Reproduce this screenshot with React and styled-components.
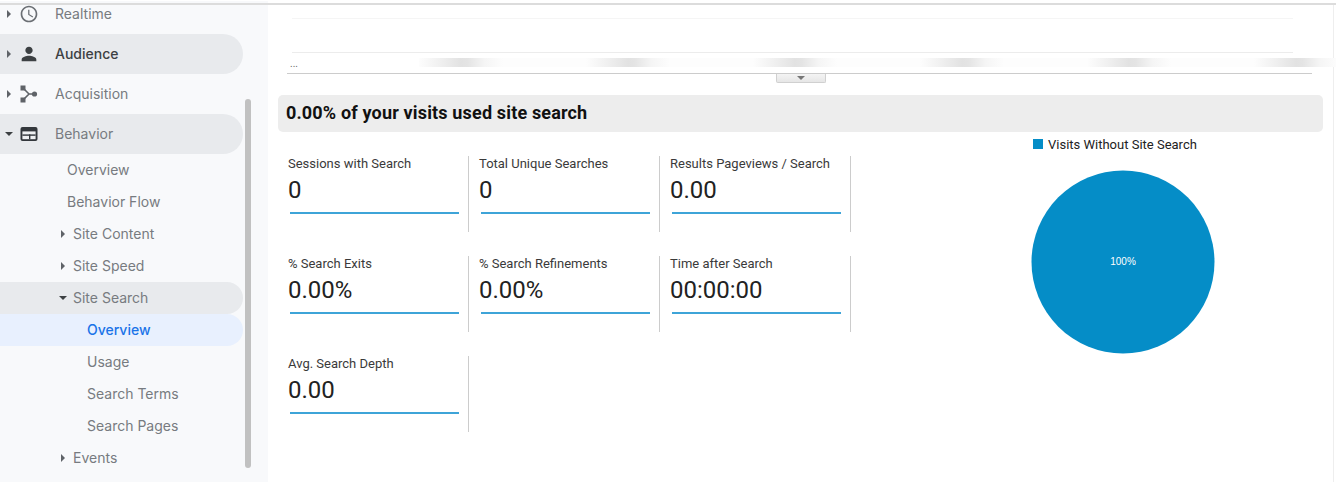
import styled, { createGlobalStyle } from "styled-components";
import { MdPerson, MdAccessTime } from "react-icons/md";

const GlobalStyle = createGlobalStyle`
    html, body {
        margin: 0;
        padding: 0;
        height: 100%;
        background: #fff;
        overflow: hidden;
    }
    body {
        font-family: Roboto, "Liberation Sans", sans-serif;
    }
`;

const Page = styled.div`
    display: flex;
    width: 1336px;
    height: 482px;
    overflow: hidden;
    box-sizing: border-box;
    border-top: 1px solid #fff;
    position: relative;
    &::before {
        content: "";
        position: absolute;
        left: 0;
        right: 0;
        top: 2px;
        height: 2px;
        background: #dcdcdc;
        z-index: 3;
    }
`;

const Sidebar = styled.nav`
    position: relative;
    width: 268px;
    flex: none;
    height: 100%;
    padding-top: 3px;
    box-sizing: border-box;
    background: #f8f9fb;
    overflow: hidden;
`;

const ScrollThumb = styled.div`
    position: absolute;
    left: 245px;
    top: 98px;
    width: 6px;
    height: 369px;
    border-radius: 3px;
    background: #c1c1c1;
`;

const List = styled.ul`
    list-style: none;
    margin: -10px 0 0;
    padding: 0;
`;

const Row = styled.li`
    display: flex;
    align-items: center;
    box-sizing: border-box;
    width: 243px;
    height: ${(p) => (p.$top ? 40 : 32)}px;
    padding-left: ${(p) => p.$indent}px;
    border-radius: 0 20px 20px 0;
    background: ${(p) => (p.$selected ? "#e8f0fe" : p.$open ? "#e8eaed" : "transparent")};
    color: ${(p) => (p.$selected ? "#1a73e8" : p.$strong ? "#3c4043" : "#777b80")};
    font-family: Inter, Roboto, sans-serif;
    font-size: 14px;
    font-weight: ${(p) => (p.$strong || p.$selected ? 500 : 400)};
    white-space: nowrap;
`;

const RowLabel = styled.span`
    margin-bottom: 2px;
`;

const CaretBox = styled.span`
    display: flex;
    justify-content: center;
    width: 16px;
    flex: none;
    margin-right: ${(p) => (p.$top ? 0 : 2)}px;
`;

const Caret = styled.span`
    width: 0;
    height: 0;
    ${(p) =>
        p.$down
            ? `border-left: 4.5px solid transparent;
               border-right: 4.5px solid transparent;
               border-top: 4.5px solid #3c4043;`
            : `border-top: 4px solid transparent;
               border-bottom: 4px solid transparent;
               border-left: 4.5px solid #5f6368;`}
`;

const IconBox = styled.span`
    display: flex;
    align-items: center;
    justify-content: center;
    width: 24px;
    height: 24px;
    flex: none;
    margin-right: 14px;
    color: ${(p) => p.$color || "#6b6f74"};
`;

const Main = styled.main`
    flex: 1;
    min-width: 0;
    position: relative;
    padding-top: 3px;
    display: flex;
    flex-direction: column;
    &::after {
        content: "";
        position: absolute;
        top: 3px;
        bottom: 0;
        left: 1065px;
        width: 1px;
        background: #eeeeee;
    }
`;

const ChartArea = styled.div`
    height: 70px;
    margin-left: 19px;
    width: 1025px;
    box-sizing: border-box;
    border-bottom: 1px solid #cccccc;
    display: flex;
    flex-direction: column;
`;

const GridLines = styled.div`
    margin: 14px 19px 0 5px;
    height: 35px;
    box-sizing: border-box;
    border-top: 1px solid #f5f5f5;
    border-bottom: 1px solid #ececec;
`;

const AxisRow = styled.div`
    position: relative;
    height: 20px;
    font-size: 10px;
    color: #666;
    padding: 4px 0 0 3px;
    box-sizing: border-box;
    line-height: 14px;
`;

const BlurBand = styled.div`
    position: absolute;
    top: 5px;
    left: 132px;
    width: 1052px;
    height: 9px;
    display: flex;
    gap: 83px;
    z-index: 2;
    background: #fdfdfd;
`;

const BlurLabel = styled.span`
    flex: none;
    width: 84px;
    height: 9px;
    background: linear-gradient(90deg, #fdfdfd 0%, #f0f0f0 25%, #e2e2e2 50%, #e4e4e4 58%, #f5f5f5 78%, #fdfdfd 100%);
`;

const ToggleRow = styled.div`
    display: flex;
    height: 9px;
    padding-left: 508px;
`;

const Toggle = styled.button`
    display: flex;
    align-items: center;
    justify-content: center;
    width: 50px;
    height: 9px;
    padding: 0;
    border: 1px solid #d0d0d0;
    border-top: none;
    border-radius: 0 0 2px 2px;
    background: linear-gradient(#f4f4f4, #e6e6e6);
`;

const ToggleCaret = styled.span`
    width: 0;
    height: 0;
    border-left: 4px solid transparent;
    border-right: 4px solid transparent;
    border-top: 4px solid #777;
`;

const TitleBar = styled.h2`
    margin: 12px 0 0 10px;
    width: 1045px;
    height: 37px;
    box-sizing: border-box;
    padding-left: 8px;
    border-radius: 5px;
    background: #ededed;
    color: #111;
    font-size: 18px;
    font-weight: 700;
    letter-spacing: 0.16px;
    line-height: 36px;
`;

const Content = styled.div`
    display: flex;
`;

const MetricGrid = styled.div`
    display: grid;
    grid-template-columns: repeat(3, 191px);
    grid-auto-rows: 100px;
    width: 573px;
    margin-left: 10px;
    padding-top: 24px;
    flex: none;
`;

const Metric = styled.div`
    height: 76px;
    box-sizing: border-box;
    padding: 0 9px 0 10px;
    border-right: 1px solid #cccccc;
`;

const MetricLabel = styled.div`
    font-size: 13px;
    line-height: 15px;
    color: #3a3a3a;
    white-space: nowrap;
`;

const MetricValue = styled.div`
    font-size: 24px;
    line-height: 28px;
    margin-top: 5px;
    color: #222;
`;

const MetricBar = styled.div`
    height: 2px;
    margin: 8px 0 0 2px;
    background: #3ea4d8;
`;

const PieColumn = styled.div`
    flex: none;
    width: 300px;
    margin-left: 182px;
    padding-top: 5px;
    display: flex;
    flex-direction: column;
`;

const Legend = styled.div`
    display: flex;
    align-items: center;
    gap: 5px;
    height: 14px;
    font-size: 13px;
    color: #222;
`;

const LegendSwatch = styled.span`
    width: 10px;
    height: 10px;
    background: #058dc7;
`;

const PieSvg = styled.svg`
    display: block;
    margin: 18px 0 0 -3px;
`;

const PieLabel = styled.text`
    fill: #fff;
    font-family: "Liberation Sans", sans-serif;
    font-size: 10px;
    text-anchor: middle;
`;

const AcquisitionIcon = () => (
    <svg width="20" height="20" viewBox="0 0 20 20">
        <path d="M4 4l6 6h5M4 16l6-6" fill="none" stroke="#5f6368" strokeWidth="1.6" />
        <rect x="1.5" y="1.5" width="5" height="5" fill="#5f6368" />
        <rect x="1.5" y="13.5" width="5" height="5" fill="#5f6368" />
        <circle cx="15.5" cy="10" r="2.6" fill="#5f6368" />
    </svg>
);

const BehaviorIcon = () => (
    <svg width="20" height="20" viewBox="0 0 20 20">
        <rect x="1.5" y="3" width="17" height="14" rx="2" fill="#33373c" />
        <rect x="3.4" y="7.4" width="13.2" height="7.8" fill="#eef0f2" />
        <rect x="3.4" y="10.4" width="13.2" height="1.4" fill="#33373c" />
        <rect x="10" y="10.4" width="1.4" height="4.8" fill="#33373c" />
    </svg>
);

const navItems = [
    { label: "Realtime", top: true, caret: "right", icon: <MdAccessTime size={20} /> },
    { label: "Audience", top: true, caret: "right", open: true, strong: true, iconColor: "#3c4043", icon: <MdPerson size={22} /> },
    { label: "Acquisition", top: true, caret: "right", icon: <AcquisitionIcon /> },
    { label: "Behavior", top: true, caret: "down", open: true, icon: <BehaviorIcon /> },
    { label: "Overview", indent: 67 },
    { label: "Behavior Flow", indent: 67 },
    { label: "Site Content", indent: 55, caret: "right" },
    { label: "Site Speed", indent: 55, caret: "right" },
    { label: "Site Search", indent: 55, caret: "down", open: true },
    { label: "Overview", indent: 87, selected: true },
    { label: "Usage", indent: 87 },
    { label: "Search Terms", indent: 87 },
    { label: "Search Pages", indent: 87 },
    { label: "Events", indent: 55, caret: "right" },
];

const metrics = [
    { label: "Sessions with Search", value: "0" },
    { label: "Total Unique Searches", value: "0" },
    { label: "Results Pageviews / Search", value: "0.00" },
    { label: "% Search Exits", value: "0.00%" },
    { label: "% Search Refinements", value: "0.00%" },
    { label: "Time after Search", value: "00:00:00" },
    { label: "Avg. Search Depth", value: "0.00" },
];

const App = () => (
    <Page>
        <GlobalStyle />
        <Sidebar>
            <List>
                {navItems.map((item, i) => (
                    <Row
                        key={i}
                        $top={item.top}
                        $indent={item.top ? 1 : item.indent}
                        $open={item.open}
                        $selected={item.selected}
                        $strong={item.strong}
                    >
                        {item.caret && (
                            <CaretBox $top={item.top}>
                                <Caret $down={item.caret === "down"} />
                            </CaretBox>
                        )}
                        {item.icon ? <IconBox $color={item.iconColor}>{item.icon}</IconBox> : null}
                        <RowLabel>{item.label}</RowLabel>
                    </Row>
                ))}
            </List>
            <ScrollThumb />
        </Sidebar>
        <Main>
            <ChartArea>
                <GridLines />
                <AxisRow>
                    ...
                    <BlurBand>
                        {[0, 1, 2, 3, 4, 5].map((n) => (
                            <BlurLabel key={n} />
                        ))}
                    </BlurBand>
                </AxisRow>
            </ChartArea>
            <ToggleRow>
                <Toggle aria-label="Collapse chart">
                    <ToggleCaret />
                </Toggle>
            </ToggleRow>
            <TitleBar>0.00% of your visits used site search</TitleBar>
            <Content>
                <MetricGrid>
                    {metrics.map((m) => (
                        <Metric key={m.label}>
                            <MetricLabel>{m.label}</MetricLabel>
                            <MetricValue>{m.value}</MetricValue>
                            <MetricBar />
                        </Metric>
                    ))}
                </MetricGrid>
                <PieColumn>
                    <Legend>
                        <LegendSwatch />
                        Visits Without Site Search
                    </Legend>
                    <PieSvg width="186" height="186" viewBox="0 0 186 186">
                        <circle cx="93" cy="93" r="91.5" fill="#058dc7" />
                        <PieLabel x="93" y="96">
                            100%
                        </PieLabel>
                    </PieSvg>
                </PieColumn>
            </Content>
        </Main>
    </Page>
);

export default App;
